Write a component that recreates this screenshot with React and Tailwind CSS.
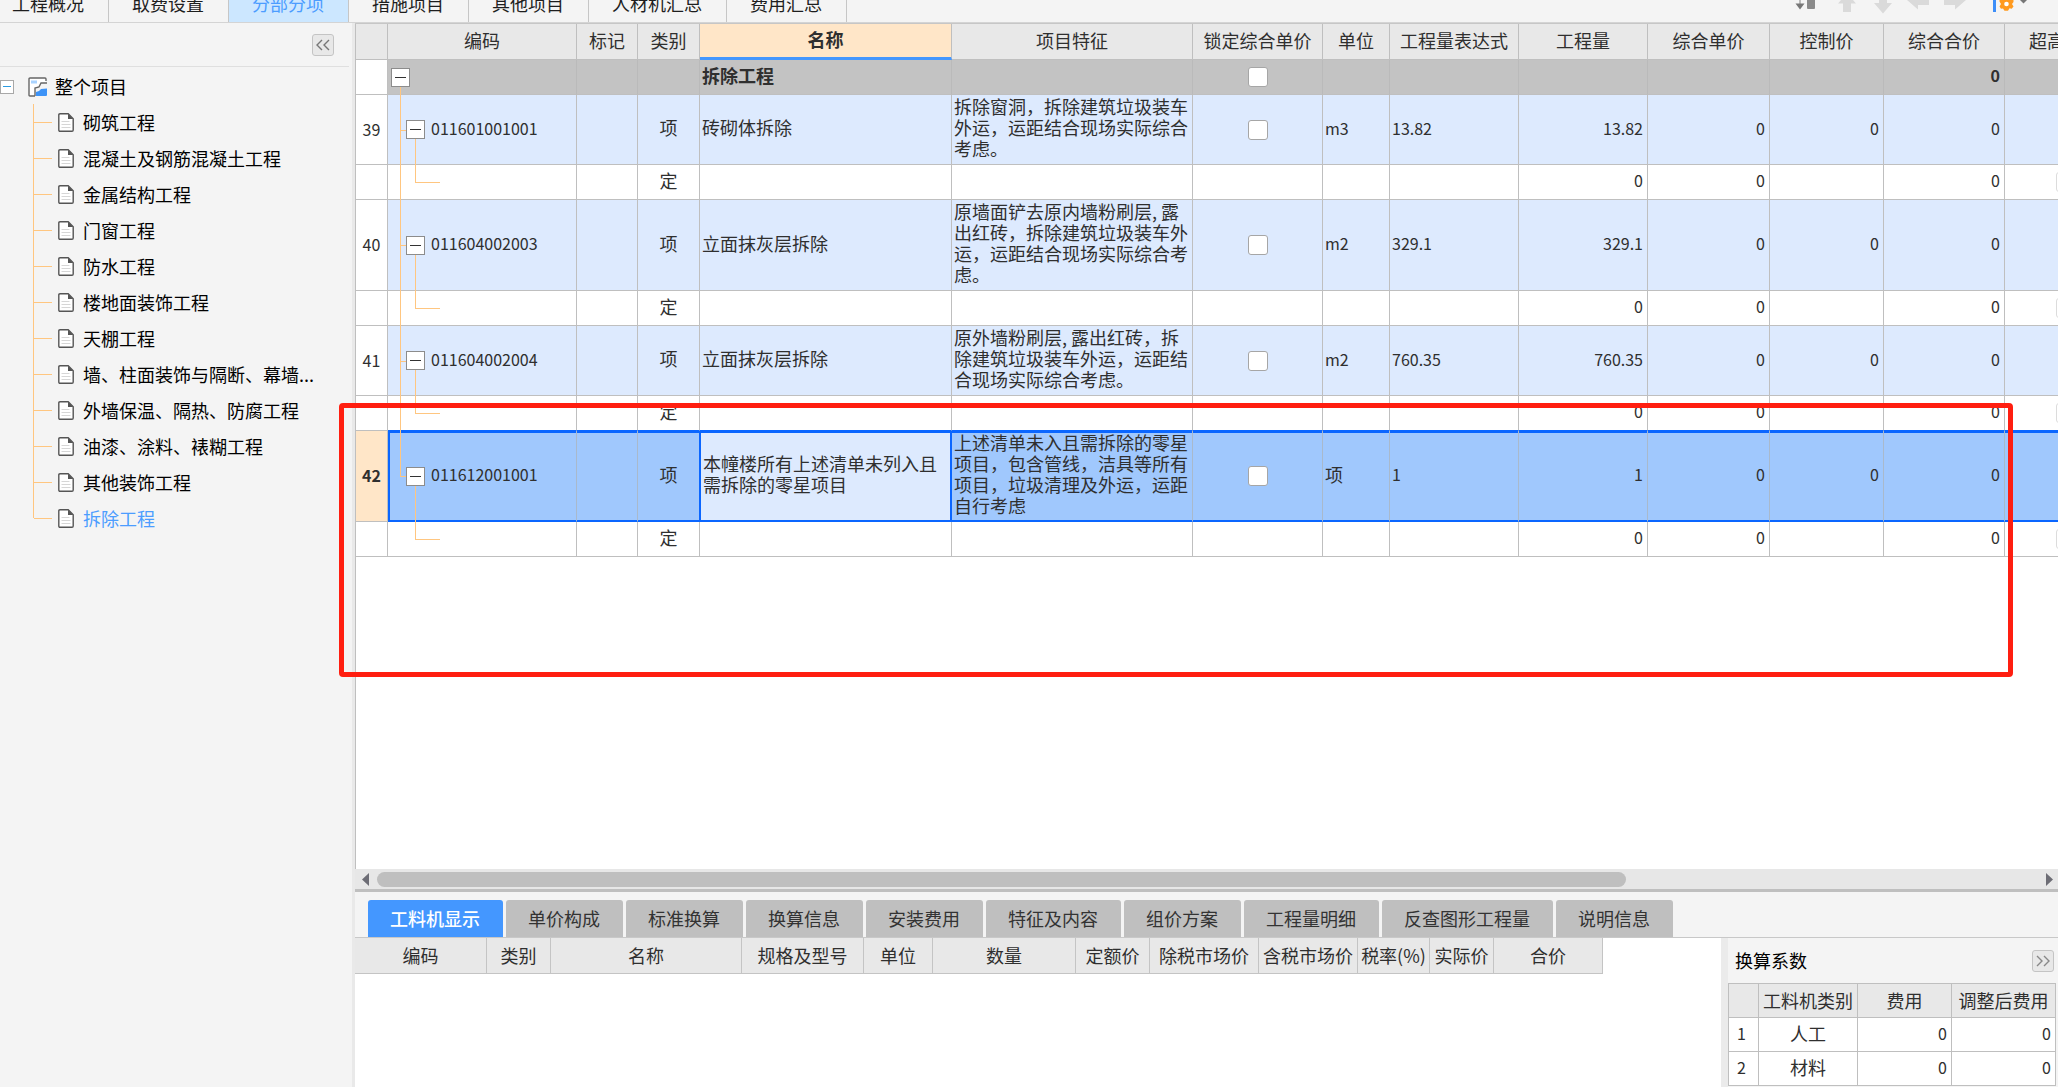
import React from "react";

const topTabs = ["工程概况", "取费设置", "分部分项", "措施项目", "其他项目", "人材机汇总", "费用汇总"];

const treeItems = [
  "砌筑工程",
  "混凝土及钢筋混凝土工程",
  "金属结构工程",
  "门窗工程",
  "防水工程",
  "楼地面装饰工程",
  "天棚工程",
  "墙、柱面装饰与隔断、幕墙...",
  "外墙保温、隔热、防腐工程",
  "油漆、涂料、裱糊工程",
  "其他装饰工程",
  "拆除工程",
];

const columns = [
  { label: "", w: "w-[32px]" },
  { label: "编码", w: "w-[189px]" },
  { label: "标记", w: "w-[61px]" },
  { label: "类别", w: "w-[62px]" },
  { label: "名称", w: "w-[252px]", active: true },
  { label: "项目特征", w: "w-[241px]" },
  { label: "锁定综合单价", w: "w-[130px]" },
  { label: "单位", w: "w-[67px]" },
  { label: "工程量表达式", w: "w-[129px]" },
  { label: "工程量", w: "w-[129px]" },
  { label: "综合单价", w: "w-[122px]" },
  { label: "控制价", w: "w-[114px]" },
  { label: "综合合价", w: "w-[121px]" },
  { label: "超高", w: "w-[122px]", start: true },
];

const items = [
  { no: 39, code: "011601001001", name: "砖砌体拆除", feature: "拆除窗洞，拆除建筑垃圾装车外运，运距结合现场实际综合考虑。", unit: "m3", qty: "13.82" },
  { no: 40, code: "011604002003", name: "立面抹灰层拆除", feature: "原墙面铲去原内墙粉刷层, 露出红砖，拆除建筑垃圾装车外运，运距结合现场实际综合考虑。", unit: "m2", qty: "329.1", tall: true },
  { no: 41, code: "011604002004", name: "立面抹灰层拆除", feature: "原外墙粉刷层, 露出红砖，拆除建筑垃圾装车外运，运距结合现场实际综合考虑。", unit: "m2", qty: "760.35" },
  { no: 42, code: "011612001001", name: "本幢楼所有上述清单未列入且需拆除的零星项目", feature: "上述清单未入且需拆除的零星项目，包含管线，洁具等所有项目，垃圾清理及外运，运距自行考虑", unit: "项", qty: "1", tall: true, selected: true },
];

const detailTabs = ["工料机显示", "单价构成", "标准换算", "换算信息", "安装费用", "特征及内容", "组价方案", "工程量明细", "反查图形工程量", "说明信息"];

const detailColumns = [
  { label: "编码", w: "w-[132px]" },
  { label: "类别", w: "w-[64px]" },
  { label: "名称", w: "w-[191px]" },
  { label: "规格及型号", w: "w-[122px]" },
  { label: "单位", w: "w-[69px]" },
  { label: "数量", w: "w-[143px]" },
  { label: "定额价", w: "w-[74px]" },
  { label: "除税市场价", w: "w-[109px]" },
  { label: "含税市场价", w: "w-[99px]" },
  { label: "税率(%)", w: "w-[72px]" },
  { label: "实际价", w: "w-[64px]" },
  { label: "合价", w: "w-[109px]" },
];

function Toggle({ label }) {
  return (
    <button aria-label={label} className="relative z-10 flex size-[19px] shrink-0 items-center justify-center border border-[#8c8c8c] bg-white">
      <span className="h-px w-[11px] bg-[#333]" />
    </button>
  );
}

function Tick({ label, muted }) {
  return (
    <input
      type="checkbox"
      aria-label={label}
      disabled={muted}
      className={`mx-auto block size-5 appearance-none rounded-[3px] border bg-white ${muted ? "border-[#dcdcdc]" : "border-[#a6a6a6]"}`}
    />
  );
}

function PageIcon() {
  return (
    <svg width="16" height="19" viewBox="0 0 16 19" className="ml-[6px] shrink-0" aria-hidden="true">
      <path d="M2 .8h8.2L15.2 5.8V17q0 1.2-1.2 1.2H2Q.8 18.200.8 17V2Q.8.8 2 .8Z" fill="#fff" stroke="#555" strokeWidth="1.4" />
      <path d="M10 .8V6h5.200Z" fill="#555" />
      <path d="M3.500 8.500h8M3.500 11.500h9M3.500 14.500h9" stroke="#d6d6d6" />
    </svg>
  );
}

function ProjectIcon() {
  return (
    <svg width="20" height="20" viewBox="0 0 20 20" className="shrink-0" aria-hidden="true">
      <path d="M1 1h17v4l-5 1-3 3-1 3-2 1v6H1Z" fill="#fff" />
      <path d="M7 19H2q-1 0-1-1V2q0-1 1-1h15q1 0 1 1v2M19 6h-6l-2 4-4 1v8" fill="none" stroke="#666" strokeWidth="1.400" />
      <path d="M3 3.500h6v3H3Z" fill="#a9d3ff" />
      <path d="M8 19v-4l3-1 2-2 6-.5V18q0 1-1 1Z" fill="#3d93f7" />
    </svg>
  );
}

function TopBar() {
  return (
    <header className="flex h-[23px] shrink-0 items-end overflow-hidden border-b border-[#d4d4d4] bg-[#f4f4f4]">
      <nav className="flex items-end">
        {topTabs.map((t, i) => (
          <button
            key={t}
            className={`h-9 border-r border-[#c6c6c6] pr-6 pb-0.5 ${i === 0 ? "pl-3" : "pl-[23px]"} ${i === 2 ? "bg-[#cce7ff] text-[#4c9dff]" : "text-[#1e1e1e]"}`}
          >
            {t}
          </button>
        ))}
      </nav>
      <div className="ml-auto flex pr-7">
        <button aria-label="排序" className="mr-[17px]">
          <svg width="26" height="22" viewBox="0 0 26 22">
            <path d="M5 0h2v4H5Z" fill="#bbb" />
            <path d="M1.500 3.500h9L6 9.500Z" fill="#777" />
            <path d="M13 0h8v8q0 1-1 1h-6q-1 0-1-1Z" fill="#8a8a8a" />
          </svg>
        </button>
        <button aria-label="上移" className="mr-4">
          <svg width="20" height="22" viewBox="0 0 20 22">
            <path d="M10-7 19 3.500h-5V12H6V3.500H1Z" fill="#dadada" />
          </svg>
        </button>
        <button aria-label="下移" className="mr-[13px]">
          <svg width="20" height="22" viewBox="0 0 20 22">
            <path d="M10 13.500 19 3h-5v-9H6v9H1Z" fill="#dadada" />
          </svg>
        </button>
        <button aria-label="左移" className="mr-[13px]">
          <svg width="24" height="22" viewBox="0 0 24 22">
            <path d="M1 0 12 9.500V5h11V-4H6Z" fill="#dadada" />
          </svg>
        </button>
        <button aria-label="右移" className="mr-[25px]">
          <svg width="24" height="22" viewBox="0 0 24 22">
            <path d="M23 0 12 9.500V5H1V-4h17Z" fill="#dadada" />
          </svg>
        </button>
        <button aria-label="设置">
          <svg width="38" height="22" viewBox="0 0 38 22">
            <path d="M1 0h3v12H1Z" fill="#3d8ef8" />
            <path d="M11-2h7l1.500 1.500 2-.3V2l-1.500 2 1.500 2.500-1.800 2.300-2.200-.5-1.500 2.500h-3.500L11 8.500l-2 .3-1.500-2.300L9 4 7.500 1.500v-2l2 .3Z" fill="#ff9a1f" />
            <circle cx="14.500" cy="4" r="2.300" fill="#fff" />
            <path d="M28 0h7l-3.500 3.500Z" fill="#777" />
          </svg>
        </button>
      </div>
    </header>
  );
}

function SideTree() {
  return (
    <aside className="flex w-[352px] shrink-0 flex-col bg-[#f4f4f4]">
      <div className="mr-[3px] flex h-11 items-center justify-end border-b border-[#dfdfdf] pr-[15px]">
        <button aria-label="折叠" className="flex size-[22px] items-center justify-center rounded-[3px] border border-[#c4c4c4] bg-[#e8e8e8]">
          <svg width="16" height="12" viewBox="0 0 16 12" fill="none" stroke="#777" strokeWidth="1.400">
            <path d="M7 1 2 6l5 5M14 1 9 6l5 5" />
          </svg>
        </button>
      </div>
      <div className="flex h-[37px] items-center pt-0.5">
        <button aria-label="折叠整个项目" className="flex size-[14px] items-center justify-center border border-[#a8a8a8] bg-white">
          <span className="h-px w-2 bg-[#2b9be0]" />
        </button>
        <span className="ml-[14px] flex items-center gap-[7px] text-black">
          <ProjectIcon />
          整个项目
        </span>
      </div>
      <ul>
        {treeItems.map((t, i) => {
          const last = i === treeItems.length - 1;
          return (
            <li key={t} className="relative flex h-9 items-center pl-[34px]">
              <span className={`absolute left-[33px] top-0 w-px bg-[#ffc680] ${last ? "h-1/2" : "h-full"}`} />
              <span className="h-px w-[18px] shrink-0 bg-[#ffc680]" />
              <PageIcon />
              <a href="#" className={`ml-[9px] whitespace-nowrap ${last ? "text-[#4c9dff]" : "text-black"}`}>
                {t}
              </a>
            </li>
          );
        })}
      </ul>
    </aside>
  );
}

const line = "absolute bg-[#ffc680]";

function ItemRows({ item }) {
  const sel = item.selected;
  const base = sel
    ? "border-r border-b border-r-[#a9b9cb] border-b-[#0a66ff] bg-[#a0c8fd] shadow-[inset_0_2px_0_#0a66ff,inset_0_-1px_0_#0a66ff]"
    : "border-r border-b border-[#bfbfbf] bg-[#ddeafe]";
  // The child row above the selected record shares the selection frame's colour.
  const sub = `border-r border-b border-r-[#bfbfbf] bg-white ${item.no === 41 ? "border-b-[#0a66ff]" : "border-b-[#bfbfbf]"}`;
  const num = "pb-1 pr-1 text-right text-base";
  return (
    <>
      <tr className={item.tall ? "h-[91px]" : "h-[70px]"}>
        <th className={`border-r border-b border-[#bfbfbf] pb-0.5 text-base ${sel ? "bg-[#ffe6c8] font-bold" : "bg-white font-normal"}`}>{item.no}</th>
        <td className={`relative ${sel ? "border-l-2 border-l-[#0a66ff]" : ""} ${base}`}>
          <span className={`${line} top-0 w-px ${sel ? "left-[10px] h-1/2" : "-bottom-px left-3"}`} />
          <span className={`${line} top-1/2 h-px w-[6px] ${sel ? "left-[10px]" : "left-3"}`} />
          <span className={`${line} -bottom-px top-1/2 w-px ${sel ? "left-[25px]" : "left-[27px]"}`} />
          <div className={`flex items-center gap-[6px] text-base ${sel ? "pl-4" : "pl-[18px]"}`}>
            <Toggle label={`折叠 ${item.code}`} />
            <span className="pb-1">{item.code}</span>
          </div>
        </td>
        <td className={base} />
        <td className={`pb-1 text-center ${base} ${sel ? "border-r-[#0a66ff]!" : ""}`}>项</td>
        <td className={`px-0.5 pb-1 ${base} ${sel ? "border-l border-r-2 border-l-[#0a66ff] border-r-[#0a66ff]! bg-[#ddeafe]!" : ""}`}>{item.name}</td>
        <td className={`px-0.5 pb-1 ${base}`}>{item.feature}</td>
        <td className={base}><Tick label={`锁定综合单价 ${item.code}`} /></td>
        <td className={`px-0.5 pb-1 ${item.unit === "项" ? "" : "text-base"} ${base}`}>{item.unit}</td>
        <td className={`px-0.5 pb-1 text-base ${base}`}>{item.qty}</td>
        <td className={`${num} ${base}`}>{item.qty}</td>
        <td className={`${num} ${base}`}>0</td>
        <td className={`${num} ${base}`}>0</td>
        <td className={`${num} ${base}`}>0</td>
        <td className={base} />
      </tr>
      <tr className="h-[35px]">
        <th className="border-r border-b border-[#bfbfbf] bg-white" />
        <td className={`relative ${sub}`}>
          {!sel && <span className={`${line} -bottom-px left-3 top-0 w-px`} />}
          <span className={`${line} left-[27px] top-0 h-1/2 w-px`} />
          <span className={`${line} left-[27px] top-1/2 h-px w-[25px]`} />
        </td>
        <td className={sub} />
        <td className={`pb-1 text-center ${sub}`}>定</td>
        <td className={sub} />
        <td className={sub} />
        <td className={sub} />
        <td className={sub} />
        <td className={sub} />
        <td className={`${num} ${sub}`}>0</td>
        <td className={`${num} ${sub}`}>0</td>
        <td className={sub} />
        <td className={`${num} ${sub}`}>0</td>
        <td className={sub}><Tick label={`超高 ${item.code}`} muted /></td>
      </tr>
    </>
  );
}

function BillTable() {
  const group = "border-r border-b border-r-[#bababa] border-b-[#bfbfbf] bg-[#c3c3c3]";
  return (
    <div className="min-h-0 flex-1 overflow-hidden border-l border-[#bfbfbf] bg-white">
      <table className="w-[1771px] table-fixed border-separate border-spacing-0 leading-[21px] text-[#2f2f2f]">
        <colgroup>
          {columns.map((c, i) => (
            <col key={i} className={c.w} />
          ))}
        </colgroup>
        <thead>
          <tr className="h-9">
            {columns.map((c, i) => (
              <th
                key={i}
                className={`whitespace-nowrap border-r border-r-[#bfbfbf] pb-0.5 ${c.start ? "pl-6 text-left" : ""} ${
                  c.active ? "border-b-3 border-b-[#4497ff] bg-[#ffe6c8] font-bold" : "border-b border-b-[#bfbfbf] bg-[#e8e8e8] font-normal"
                }`}
              >
                {c.label}
              </th>
            ))}
          </tr>
        </thead>
        <tbody>
          <tr className="h-[35px]">
            <th className="border-r border-b border-[#bfbfbf] bg-white" />
            <td className={`relative pl-[3px] ${group}`}>
              <span className={`${line} -bottom-px left-3 top-1/2 w-px`} />
              <Toggle label="折叠 拆除工程" />
            </td>
            <td className={group} />
            <td className={group} />
            <td className={`px-0.5 pb-1 font-bold ${group}`}>拆除工程</td>
            <td className={group} />
            <td className={group}><Tick label="锁定综合单价 拆除工程" /></td>
            <td className={group} />
            <td className={group} />
            <td className={group} />
            <td className={group} />
            <td className={group} />
            <td className={`pb-1 pr-1 text-right text-base font-bold ${group}`}>0</td>
            <td className={group} />
          </tr>
          {items.map((it) => (
            <ItemRows key={it.no} item={it} />
          ))}
        </tbody>
      </table>
    </div>
  );
}

function ScrollStrip() {
  return (
    <div className="flex h-5 shrink-0 items-center bg-[#e7e7e7] pl-[7px] pr-[5px]">
      <button aria-label="向左滚动" className="mr-2">
        <svg width="7" height="13" viewBox="0 0 7 13"><path d="M7 0v13L0 6.500Z" fill="#6d6d75" /></svg>
      </button>
      <div className="flex-1">
        <div className="h-[15px] w-3/4 rounded-full bg-[#bfbfbf]" />
      </div>
      <button aria-label="向右滚动" className="ml-1">
        <svg width="7" height="13" viewBox="0 0 7 13"><path d="M0 0v13l7-6.500Z" fill="#6d6d75" /></svg>
      </button>
    </div>
  );
}

function FactorPanel() {
  const cell = "border-r border-b border-[#bfbfbf]";
  return (
    <section className="w-[337px] shrink-0 overflow-hidden border-l-[7px] border-[#ebebeb] bg-[#f4f4f4]">
      <div className="flex h-[45px] items-center justify-between pl-[7px] pr-1 text-black">
        <h2>换算系数</h2>
        <button aria-label="展开" className="flex size-[22px] items-center justify-center rounded-[3px] border border-[#c4c4c4] bg-[#e8e8e8]">
          <svg width="16" height="12" viewBox="0 0 16 12" fill="none" stroke="#888" strokeWidth="1.400">
            <path d="m2 1 5 5-5 5M9 1l5 5-5 5" />
          </svg>
        </button>
      </div>
      <table className="w-[328px] table-fixed border-separate border-spacing-0 border-l border-t border-[#bfbfbf] bg-white text-[#2f2f2f]">
        <colgroup>
          <col className="w-[30px]" />
          <col className="w-[99px]" />
          <col className="w-[94px]" />
          <col className="w-[104px]" />
        </colgroup>
        <thead>
          <tr className="h-[34px] bg-[#e8e8e8]">
            {["", "工料机类别", "费用", "调整后费用"].map((h) => (
              <th key={h} className={`whitespace-nowrap font-normal ${cell}`}>{h}</th>
            ))}
          </tr>
        </thead>
        <tbody>
          {["人工", "材料"].map((n, i) => (
            <tr key={n} className="h-[34px]">
              <th className={`pb-1 pr-1 text-base font-normal ${cell}`}>{i + 1}</th>
              <td className={`pb-0.5 text-center ${cell}`}>{n}</td>
              <td className={`pb-1 pr-1 text-right text-base ${cell}`}>0</td>
              <td className={`pb-1 pr-1 text-right text-base ${cell}`}>0</td>
            </tr>
          ))}
        </tbody>
      </table>
    </section>
  );
}

function DetailPanel() {
  return (
    <section className="flex h-[198px] shrink-0 flex-col border-t-[3px] border-[#bfbfbf] bg-[#f4f4f4]">
      <nav className="flex gap-[3px] border-b border-[#c8c8c8] pl-[13px] pt-2">
        {detailTabs.map((t, i) => (
          <button
            key={t}
            className={`h-[37px] whitespace-nowrap rounded-t-[3px] pl-[22px] pr-[23px] ${i === 0 ? "bg-[#4497ff] font-medium text-white" : "bg-[#bfbfbf] text-[#333]"}`}
          >
            {t}
          </button>
        ))}
      </nav>
      <div className="flex min-h-0 flex-1">
        <div className="min-w-0 flex-1 overflow-hidden bg-white">
          <table className="w-[1248px] table-fixed border-separate border-spacing-0 text-[#2f2f2f]">
            <thead>
              <tr className="h-9">
                {detailColumns.map((c) => (
                  <th key={c.label} className={`whitespace-nowrap border-b border-r border-[#c4c4c4] bg-[#e8e8e8] font-normal ${c.w}`}>
                    {c.label}
                  </th>
                ))}
              </tr>
            </thead>
          </table>
        </div>
        <FactorPanel />
      </div>
    </section>
  );
}

export default function App() {
  return (
    <div
      lang="zh-CN"
      className="relative flex h-screen flex-col overflow-hidden bg-[#f4f4f4] font-['Noto_Sans_CJK_SC',sans-serif] text-[18px] leading-[21px]"
    >
      <TopBar />
      <div className="flex min-h-0 flex-1">
        <SideTree />
        <div className="w-[3px] shrink-0 bg-[#e9e9e9]" />
        <main className="flex min-w-0 flex-1 flex-col border-t border-[#c6c6c6]">
          <BillTable />
          <ScrollStrip />
          <DetailPanel />
        </main>
      </div>
      <div className="pointer-events-none absolute left-[339px] right-[45px] top-[403px] h-[274px] rounded-[4px] border-[5px] border-[#ff1e10]" />
    </div>
  );
}
